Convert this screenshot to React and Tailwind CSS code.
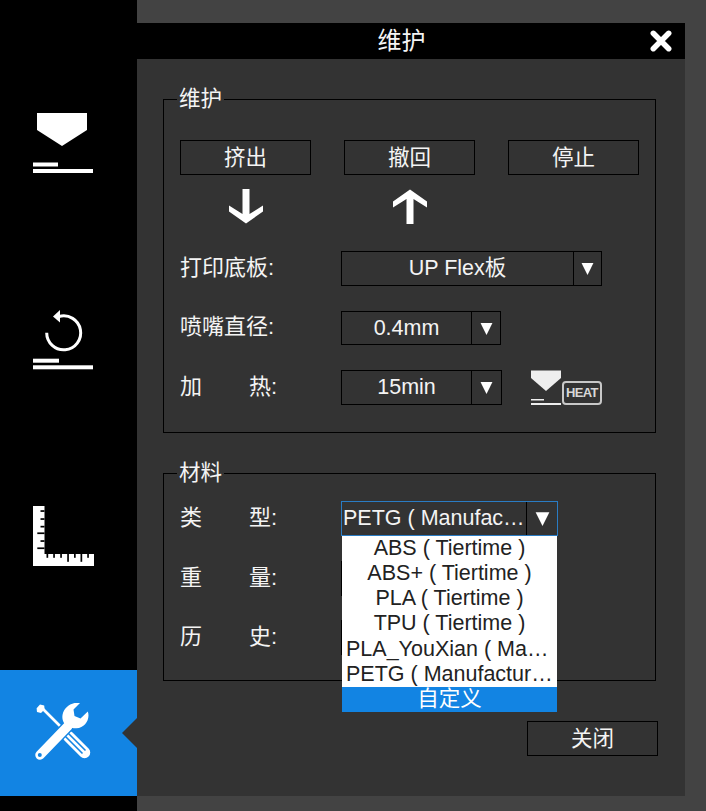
import { useState } from "react";

const materials = [
  "ABS ( Tiertime )",
  "ABS+ ( Tiertime )",
  "PLA ( Tiertime )",
  "TPU ( Tiertime )",
  "PLA_YouXian ( Manufacturer )",
  "PETG ( Manufacturer )",
];

function NozzleIcon() {
  return (
    <svg viewBox="0 0 60 60" className="w-[60px] h-[60px]" fill="#fff">
      <polygon points="4,0 54,0 54,17 29,33 4,17" />
      <rect x="0" y="49.5" width="25" height="4" />
      <rect x="0" y="56" width="60" height="4" />
    </svg>
  );
}

function ReturnIcon() {
  return (
    <svg viewBox="0 0 60 60" className="w-[60px] h-[60px]" fill="#fff">
      <path d="M26 6.5A17 17 0 1 1 13.7 22.8" fill="none" stroke="#fff" strokeWidth="3" />
      <polygon points="20,6.5 27,0 27,12.5" />
      <rect x="0" y="48.7" width="26" height="4" />
      <rect x="0" y="55.3" width="61" height="4" />
    </svg>
  );
}

function RulerIcon() {
  return (
    <svg viewBox="0 0 61 60" className="w-[61px] h-[60px]" fill="#fff">
      <polygon points="0,0 11.5,0 11.5,48 61,48 61,60 0,60" />
      <g fill="#000">
        <rect x="7.5" y="4.2" width="4" height="1.7" />
        <rect x="7.5" y="12.2" width="4" height="1.7" />
        <rect x="7.5" y="19.8" width="4" height="1.7" />
        <rect x="4.3" y="26.4" width="7.2" height="1.7" />
        <rect x="7.5" y="34.2" width="4" height="1.7" />
        <rect x="4.3" y="41.4" width="7.2" height="1.7" />
        <rect x="13.5" y="48" width="1.7" height="3.8" />
        <rect x="20.2" y="48" width="1.7" height="3.8" />
        <rect x="27.2" y="48" width="1.7" height="3.8" />
        <rect x="34.2" y="48" width="1.7" height="7.8" />
        <rect x="41" y="48" width="1.7" height="3.8" />
        <rect x="47.5" y="48" width="1.7" height="7.8" />
        <rect x="54.2" y="48" width="1.7" height="3.8" />
      </g>
    </svg>
  );
}

function ToolsIcon() {
  return (
    <svg viewBox="0 1 60 60" className="w-[60px] h-[60px]">
      {/* screwdriver */}
      <path d="M8 5L32 29" stroke="#fff" strokeWidth="2.6" fill="none" />
      <path d="M3.6 6.2L7 2.6L11.2 3.4L11.6 7.6L8 11L4 10Z" fill="#fff" />
      <path d="M35.5 34.5L51.5 50.5" stroke="#fff" strokeWidth="11.5" strokeLinecap="round" fill="none" />
      <path d="M35.5 31.5L52.5 48.5M32.5 34.5L49.5 51.5" stroke="#1284e3" strokeWidth="1.6" fill="none" />
      {/* wrench */}
      <path d="M7 53L35 24" stroke="#1284e3" strokeWidth="12" fill="none" />
      <path d="M7 53L35 24" stroke="#fff" strokeWidth="9.5" strokeLinecap="round" fill="none" />
      <path d="M47.5 0.5L40.5 7.5L41.5 14L47.5 16.5L54.8 9.5C57.5 17 52 26 43.5 26.3C40 26.4 37.5 25.5 35 24L31 21C29.5 18 29 15.5 29.6 12.5C31 5 38.5 0 47.5 0.5Z" fill="#fff" />
      <circle cx="6.8" cy="53" r="2" fill="#1284e3" />
    </svg>
  );
}

function ArrowIcon({ up }) {
  return (
    <svg viewBox="0 0 36 35" className={"w-[36px] h-[35px] " + (up ? "rotate-180" : "")} fill="#fff">
      <polygon points="1,16.5 14.5,25 14.5,0 21.5,0 21.5,25 35,16.5 35,22.5 18,34.5 1,22.5" />
    </svg>
  );
}

function Caret({ size = 13 }) {
  return (
    <svg viewBox="0 0 12 12" style={{ width: size, height: size }} fill="#fff">
      <polygon points="0.5,1 11.5,1 6,12" />
    </svg>
  );
}

function Select({ value, width, height = 35, arrowW = 29, left, focused, children }) {
  return (
    <div
      className={"relative flex shrink-0 border " + (focused ? "border-[#2a7cc4]" : "border-black")}
      style={{ width, height }}
    >
      <div className={"flex-1 min-w-0 truncate " + (left ? "text-left pl-[1px] leading-[32px]" : "text-center leading-[32px]")}>
        {value}
      </div>
      <div className="flex items-center justify-center border-l border-black" style={{ width: arrowW }}>
        <Caret size={focused ? 15 : 13} />
      </div>
      {children}
    </div>
  );
}

function Row({ label, children, className = "" }) {
  return (
    <div className={"flex items-center " + className}>
      <div className="w-[161px] shrink-0 text-[22px] leading-[28px] pb-[2px]">{label}</div>
      {children}
    </div>
  );
}

function Spaced({ a, b }) {
  return (
    <div className="flex justify-between w-[97px]">
      <span>{a}</span>
      <span>{b}</span>
    </div>
  );
}

function Box({ title, className = "", children }) {
  return (
    <fieldset className={"ml-[26px] w-[493px] border border-black px-[16px] " + className}>
      <legend className="-ml-[3px] px-[2px] leading-[22px]">{title}</legend>
      {children}
    </fieldset>
  );
}

export default function App() {
  const [active] = useState(3);
  const nav = [<NozzleIcon />, <ReturnIcon />, <RulerIcon />, <ToolsIcon />];

  return (
    <div className="flex w-full h-[811px] overflow-hidden bg-[#434343] text-[21.5px] text-[#f4f4f4] font-['Liberation_Sans','Noto_Sans_CJK_SC',sans-serif]">
      <aside className="w-[137px] shrink-0 bg-black flex flex-col gap-[70.67px] pt-[80px]">
        {nav.map((icon, i) => (
          <div
            key={i}
            className={"relative h-[126px] flex items-center pl-[33px] " + (i === active ? "bg-[#1284e3]" : "")}
          >
            {icon}
            {i === active && (
              <div className="absolute right-0 top-[48px] border-y-[15px] border-r-[15px] border-y-transparent border-r-[#333333]" />
            )}
          </div>
        ))}
      </aside>

      <main className="w-[548px] h-[773px] mt-[23px] bg-[#333333] flex flex-col">
        <div className="h-[36px] shrink-0 bg-black flex items-center">
          <div className="flex-1 text-center text-[24px] pl-[16px] leading-[34px]">维护</div>
          <svg viewBox="0 0 20 20" className="w-[22px] h-[22px] mr-[13px]" stroke="#fff" strokeWidth="5" strokeLinecap="round">
            <path d="M3 3L17 17M17 3L3 17" />
          </svg>
        </div>

        <Box title="维护" className="mt-[29px] h-[345px]">
          <div className="grid grid-cols-[131px_131px_131px] gap-x-[33px] mt-[30px]">
            {["挤出", "撤回", "停止"].map((t) => (
              <button key={t} className="h-[35px] border border-black pt-[1px]">{t}</button>
            ))}
            <div className="flex justify-center mt-[14px]"><ArrowIcon /></div>
            <div className="flex justify-center mt-[14px]"><ArrowIcon up /></div>
          </div>
          <div className="flex flex-col gap-[25px] mt-[27px]">
            <Row label="打印底板:">
              <Select value="UP Flex板" width={261} arrowW={28} />
            </Row>
            <Row label="喷嘴直径:">
              <Select value="0.4mm" width={160} height={34} />
            </Row>
            <Row label={<Spaced a="加" b="热:" />}>
              <Select value="15min" width={161} arrowW={30} />
              <div className="relative ml-[29px] w-[71px] h-[35px] shrink-0">
                <svg viewBox="0 0 31 35" className="w-[31px] h-[35px]" fill="#eeeeee">
                  <polygon points="0,0.5 30,0.5 30,8 15,21 0,8" />
                  <rect x="0" y="29" width="13" height="1.5" />
                  <rect x="0" y="33" width="30" height="2" />
                </svg>
                <div className="absolute right-0 bottom-0 w-[40px] h-[24px] flex items-center justify-center rounded-[4px] border-2 border-[#c8c8c8] text-[13px] tracking-tighter font-bold text-[#d8d8d8]">
                  HEAT
                </div>
              </div>
            </Row>
          </div>
        </Box>

        <Box title="材料" className="mt-[29px] h-[219px]">
          <div className="flex flex-col mt-[17px]">
            <Row label={<Spaced a="类" b="型:" />}>
              <Select value="PETG ( Manufacturer )" width={217} arrowW={31} left focused>
                <ul className="absolute z-10 inset-x-0 top-[34px] bg-white text-[#222222] text-center">
                  {materials.map((m) => (
                    <li key={m} className="h-[25.14px] leading-[24px] px-[4px] truncate">{m}</li>
                  ))}
                  <li className="h-[25.14px] leading-[24px] bg-[#1284e3] text-white">自定义</li>
                </ul>
              </Select>
            </Row>
            <Row label={<Spaced a="重" b="量:" />} className="mt-[25px]">
              <Select value="" width={160} />
            </Row>
            <Row label={<Spaced a="历" b="史:" />} className="mt-[24px]">
              <Select value="" width={160} />
            </Row>
          </div>
        </Box>

        <button className="self-end mt-[40px] mr-[27px] w-[131px] h-[35px] border border-black pt-[1px]">关闭</button>
      </main>
    </div>
  );
}
